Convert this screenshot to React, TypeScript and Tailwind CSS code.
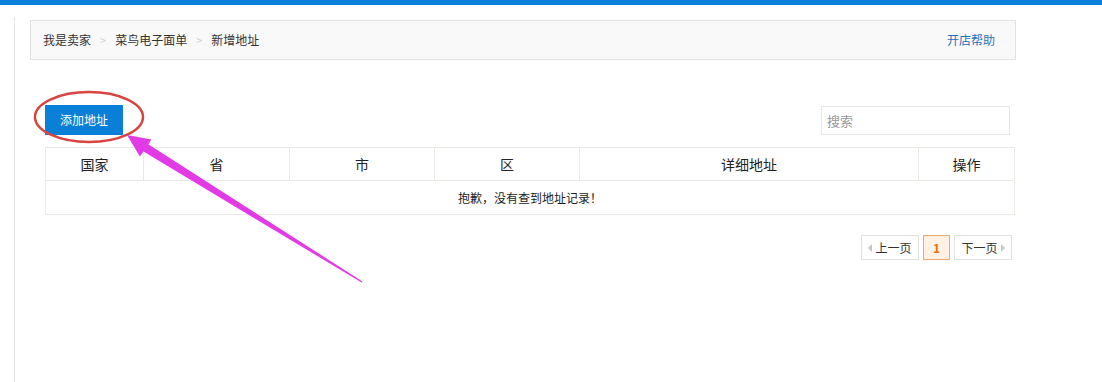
import React from 'react';

const font = { fontFamily: '"Microsoft YaHei", "Noto Sans CJK SC", "Liberation Sans", sans-serif' };

const columns = [
  { label: '国家', w: 'w-[98px]' },
  { label: '省', w: 'w-[146px]' },
  { label: '市', w: 'w-[145px]' },
  { label: '区', w: 'w-[145px]' },
  { label: '详细地址', w: 'w-[339px]' },
  { label: '操作', w: 'flex-1' },
];

function Crumb({ children }: { children: React.ReactNode }) {
  return <span className="text-[#333]">{children}</span>;
}

function Sep() {
  return <span className="mx-[9px] text-[#d0d0d0] text-[11px]">&gt;</span>;
}

export default function App() {
  return (
    <div className="relative w-[1102px] h-[382px] bg-white overflow-hidden" style={font}>
      <div className="h-[5px] bg-[#0a7fd8]" />
      <div className="flex">
        <div className="w-[15px] h-[377px] mt-[12px] border-r border-[#e6e6e6]" />
        <div className="pl-[15px] pt-[15px]">
          {/* breadcrumb */}
          <div className="w-[986px] h-[40px] flex items-center justify-between bg-[#f9f9f9] border border-[#e2e2e2] pl-[12px] pr-[20px] text-[12px] leading-none">
            <div className="flex items-center">
              <Crumb>我是卖家</Crumb>
              <Sep />
              <Crumb>菜鸟电子面单</Crumb>
              <Sep />
              <Crumb>新增地址</Crumb>
            </div>
            <a className="text-[#1f72b8]">开店帮助</a>
          </div>

          <div className="ml-[15px] w-[970px]">
            <div className="mt-[45px] flex items-start justify-between">
              <button className="w-[78px] h-[30px] bg-[#0a7fd8] text-white text-[12px] leading-none">添加地址</button>
              <div className="mt-[1px] mr-[5px] w-[189px] h-[29px] border border-[#e8e6e0] flex items-center pl-[5px] text-[13px] text-[#999] leading-none">
                搜索
              </div>
            </div>

            <div className="mt-[12px] border border-[#ebe9e3]">
              <div className="flex h-[33px] border-b border-[#ebe9e3]">
                {columns.map((c, i) => (
                  <div
                    key={c.label}
                    className={`${c.w} flex items-center justify-center text-[14px] text-[#222] leading-none ${i < columns.length - 1 ? 'border-r border-[#ebe9e3]' : ''}`}
                  >
                    {c.label}
                  </div>
                ))}
              </div>
              <div className="h-[33px] flex items-center justify-center text-[12px] text-[#222] leading-none">
                抱歉，没有查到地址记录！
              </div>
            </div>

            <div className="mt-[20px] mr-[3px] flex justify-end gap-[4px] text-[12px] leading-none">
              <div className="h-[25px] w-[58px] flex items-center justify-center gap-[3px] border border-[#e3e1db] text-[#333]">
                <span className="w-0 h-0 border-y-[4px] border-y-transparent border-r-[4px] border-r-[#c8c8c8]" />
                上一页
              </div>
              <div className="h-[25px] w-[27px] flex items-center justify-center border border-[#f0a86a] bg-[#fff1e4] text-[#e8700f] font-bold">
                1
              </div>
              <div className="h-[25px] w-[58px] flex items-center justify-center gap-[3px] border border-[#e3e1db] text-[#333]">
                下一页
                <span className="w-0 h-0 border-y-[4px] border-y-transparent border-l-[4px] border-l-[#c8c8c8]" />
              </div>
            </div>
          </div>
        </div>
      </div>

      {/* annotation overlay */}
      <svg className="absolute left-0 top-0 pointer-events-none" width="1102" height="382">
        <ellipse cx="89" cy="117" rx="54" ry="25" fill="none" stroke="#d8453f" strokeWidth="2.5" />
        <polygon
          fill="#e23be6"
          points="127,135 151.5,139.5 148.3,144.3 362.4,281.4 361.6,282.6 143.5,151.6 139.9,156.5"
        />
      </svg>
    </div>
  );
}
